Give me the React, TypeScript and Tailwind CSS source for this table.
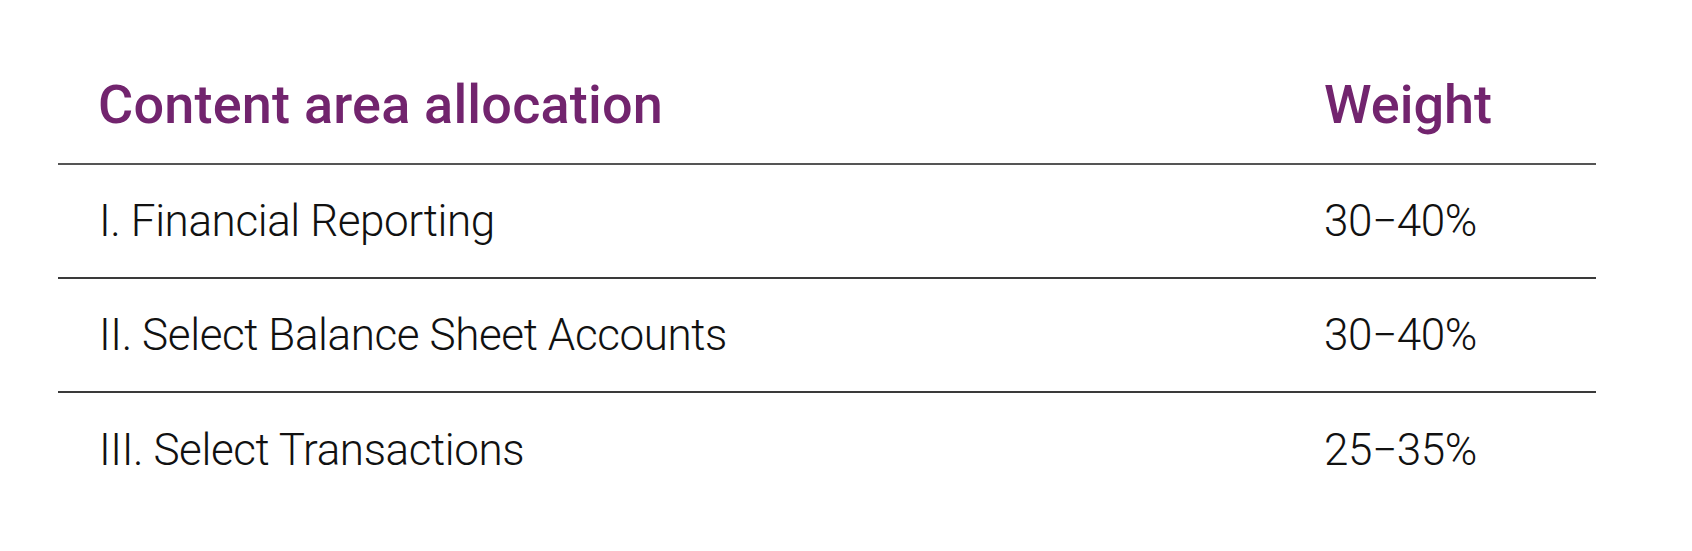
const rows = [
  { area: "I. Financial Reporting", weight: "30\u221240%" },
  { area: "II. Select Balance Sheet Accounts", weight: "30\u221240%" },
  { area: "III. Select Transactions", weight: "25\u221235%" },
];

export default function App() {
  return (
    <div className="min-h-screen bg-white pt-[46px] pl-[58px] pr-[96px] font-['Roboto',sans-serif]">
      {/* Header */}
      <div className="flex h-[119px] items-center border-b-2 border-[#555555]">
        <div className="flex-1 pl-[40px] text-[54px] font-medium tracking-[0.2px] text-[#72246e]">
          Content area allocation
        </div>
        <div className="w-[272px] text-[54px] font-medium text-[#72246e]">Weight</div>
      </div>

      {rows.map((row, i) => (
        <div
          key={row.area}
          className={
            i < rows.length - 1
              ? "flex h-[114px] items-center border-b-2 border-[#3a3a3a]"
              : "flex h-[114px] items-center"
          }
        >
          <div className="flex-1 pl-[41px] text-[44px] font-light tracking-[-0.4px] text-[#111111]">
            {row.area}
          </div>
          <div className="w-[272px] text-[44px] font-light tracking-[-0.4px] text-[#111111]">
            {row.weight}
          </div>
        </div>
      ))}
    </div>
  );
}
